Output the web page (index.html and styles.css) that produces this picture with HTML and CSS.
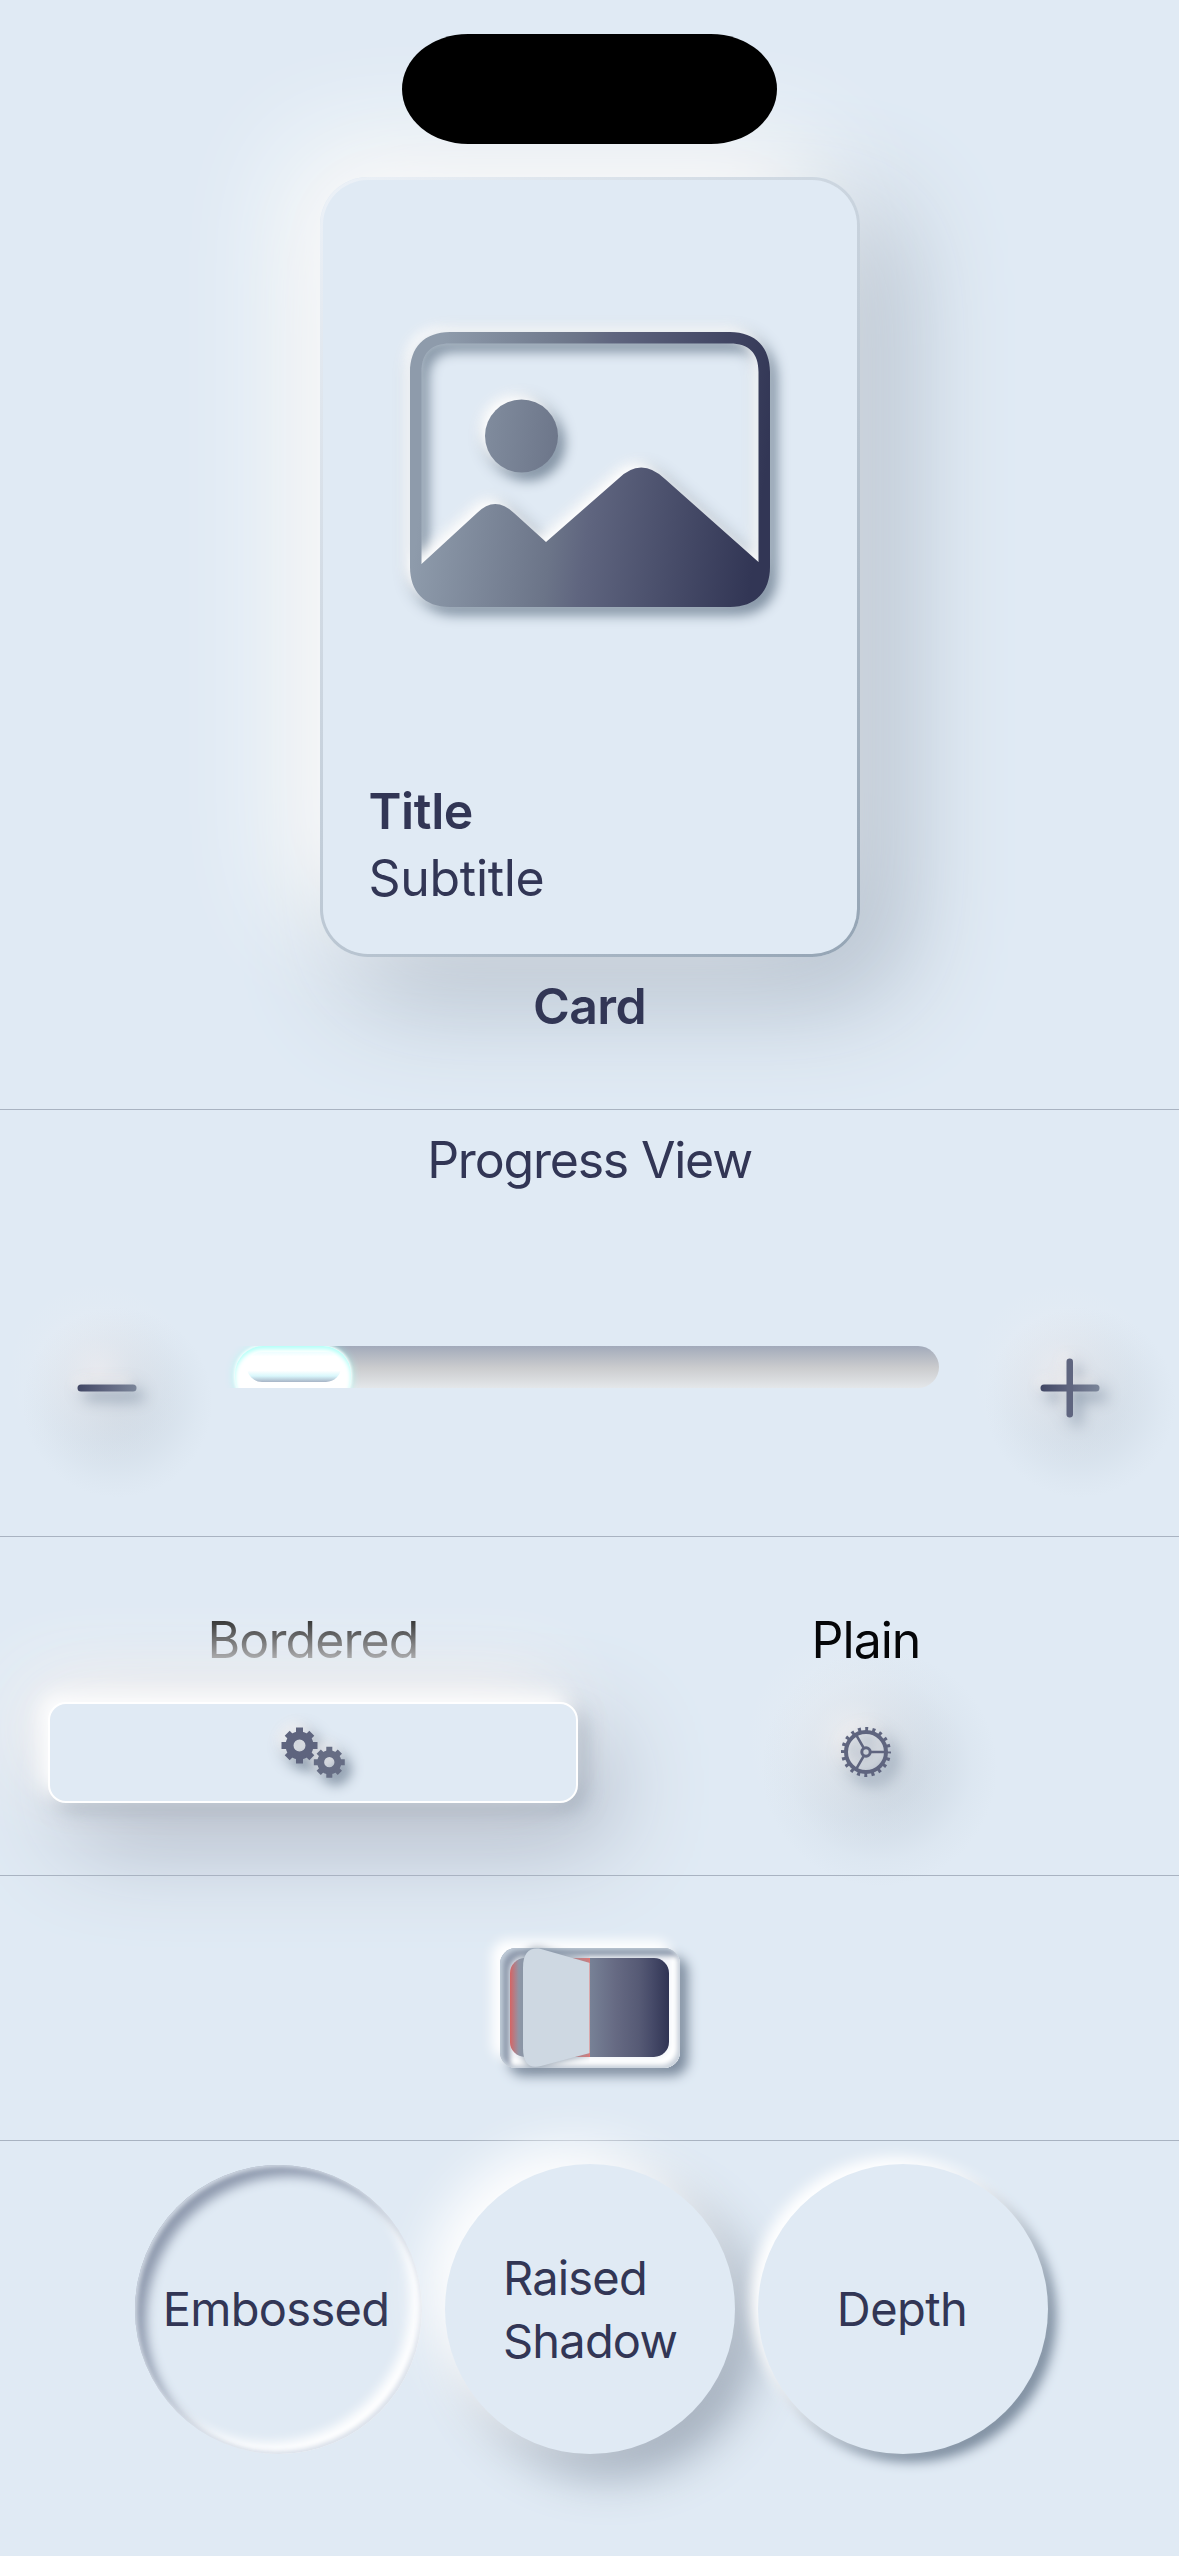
FILE: index.html
```html
<!DOCTYPE html>
<html lang="en">
<head>
<meta charset="utf-8">
<title>Neumorphic Components</title>
<link rel="stylesheet" href="styles.css">
</head>
<body>
<main class="screen">
  <section class="card-section">
    <div class="island"></div>
    <article class="card">
      <svg class="photo" viewBox="0 0 360 275" width="360" height="275">
        <defs>
          <linearGradient id="ink" gradientUnits="userSpaceOnUse" x1="20" y1="100" x2="355" y2="145">
            <stop offset="0" stop-color="#8e9bab"/>
            <stop offset=".4" stop-color="#6b7488"/>
            <stop offset=".5" stop-color="#5f657f"/>
            <stop offset="1" stop-color="#323655"/>
          </linearGradient>
        </defs>
        <path fill="url(#ink)" fill-rule="evenodd" d="M40 0H320C346 0 360 16 360 40V235C360 259 346 275 320 275H40C14 275 0 259 0 235V40C0 16 14 0 40 0ZM40 11.500C21 11.500 11.500 21 11.500 40V232L67 181Q85 163 104 181L136 210L208 147Q231 124 255 147L348.500 230V40C348.500 21 339 11.500 320 11.500Z"/>
        <circle fill="url(#ink)" cx="111.500" cy="104" r="36.500"/>
      </svg>
      <div class="caption">
        <h2 class="title">Title</h2>
        <p class="subtitle">Subtitle</p>
      </div>
    </article>
    <h3 class="card-label">Card</h3>
  </section>

  <section class="progress-section">
    <p class="progress-label">Progress View</p>
    <div class="progress-row">
      <button class="step" aria-label="Decrease">
        <svg class="step-icon" viewBox="0 0 60 60" width="60" height="60">
          <defs>
            <linearGradient id="bar" gradientUnits="userSpaceOnUse" x1="0" y1="28" x2="60" y2="34">
              <stop offset="0" stop-color="#414765"/>
              <stop offset=".5" stop-color="#606680"/>
              <stop offset="1" stop-color="#7b869a"/>
            </linearGradient>
          </defs>
          <rect fill="url(#bar)" x=".5" y="26.500" width="59" height="7" rx="3.500"/>
        </svg>
      </button>
      <div class="track"><div class="fill"><div class="core"></div></div></div>
      <button class="step" aria-label="Increase">
        <svg class="step-icon" viewBox="0 0 60 60" width="60" height="60">
          <rect fill="url(#bar)" x=".5" y="26.500" width="59" height="7" rx="3.500"/>
          <rect fill="#5f657f" x="26.500" y=".5" width="6.500" height="59" rx="3.200"/>
        </svg>
      </button>
    </div>
  </section>

  <section class="buttons-section">
    <div class="button-group">
      <p class="bordered-label">Bordered</p>
      <button class="bordered" aria-label="Settings">
        <svg class="gears" viewBox="0 0 64 51" width="64" height="51">
          <defs>
            <g id="cog">
              <circle r="10" fill="none" stroke-width="8"/>
              <path stroke-width="7" stroke-linecap="butt" d="M0-11V-18M0 11V18M11 0H18M-11 0H-18M7.800-7.800L12.300-12.300M-7.800-7.800L-12.300-12.300M7.800 7.800L12.300 12.300M-7.800 7.800L-12.300 12.300"/>
            </g>
          </defs>
          <use href="#cog" stroke="#5e647e" transform="translate(18.500 18.500)"/>
          <use href="#cog" stroke="#666d84" transform="translate(48.300 35.200) scale(.86)"/>
        </svg>
      </button>
    </div>
    <div class="button-group">
      <p class="plain-label">Plain</p>
      <button class="plain" aria-label="Gear">
        <svg class="gear" viewBox="-26 -26 52 52" width="52" height="52" fill="none" stroke="#5f657f">
          <circle r="20" stroke-width="4"/>
          <circle r="23" stroke-width="4" stroke-dasharray="3 4.226" stroke-dashoffset="1.500"/>
          <circle r="4.200" stroke-width="3"/>
          <path stroke-width="2.600" d="M5 0H20M-2.500-4.330L-10-17.320M-2.500 4.330L-10 17.320"/>
        </svg>
      </button>
    </div>
  </section>

  <section class="toggle-section">
    <div class="toggle">
      <div class="window"><div class="window-off"></div><div class="window-on"></div></div>
      <svg class="flap" viewBox="0 0 68 120" width="68" height="120">
        <path fill="#ced8e2" d="M0 20C0 4 7-1 18 1L67 15V105L18 118C7 121 0 116 0 100Z"/>
      </svg>
    </div>
  </section>

  <section class="circles-section">
    <div class="circle embossed"><span>Embossed</span></div>
    <div class="circle raised"><span>Raised<br>Shadow</span></div>
    <div class="circle depth"><span>Depth</span></div>
  </section>
</main>
</body>
</html>
```
FILE: styles.css
```css
* { box-sizing: border-box; }

body {
  margin: 0;
  background: #e0eaf4;
  color: #323655;
  font-family: Inter, "Liberation Sans", sans-serif;
  font-size: 50px;
  line-height: 61px;
}

h2, h3, p { margin: 0; font-size: inherit; font-weight: 400; }

button {
  margin: 0;
  padding: 0;
  border: 0;
  background: none;
  color: inherit;
  font: inherit;
}

svg { display: block; overflow: visible; }

.screen {
  display: flex;
  flex-direction: column;
  width: 1179px;
  height: 2556px;
  overflow: hidden;
}

.screen > section + section { border-top: 1px solid #a9b3c1; }

/* Card */
.card-section {
  display: flex;
  flex-direction: column;
  align-items: center;
  height: 1109px;
  padding-top: 34px;
}

.island {
  z-index: 1;
  width: 375px;
  height: 110px;
  border-radius: 66px / 55px;
  background: #000;
}

.card {
  display: flex;
  flex-direction: column;
  width: 540px;
  height: 780px;
  margin-top: 33px;
  padding: 152px 45px 45px 46px;
  border: 3px solid transparent;
  border-radius: 48px;
  background:
    linear-gradient(#e0eaf4, #e0eaf4) padding-box,
    linear-gradient(135deg, #edf2f8, #c3ced9 50%, #94a4b4) border-box;
  box-shadow: -34px -34px 110px #fffefc, 34px 34px 110px #a9b5c3;
}

.photo {
  align-self: center;
  filter: drop-shadow(-6px -6px 6px #fff) drop-shadow(7px 8px 6px #8393a4);
}

.caption {
  display: flex;
  flex-direction: column;
  gap: 6px;
  margin-top: auto;
}

.title, .card-label { font-weight: 600; letter-spacing: -.4px; }
.subtitle { letter-spacing: -.300px; }
.card-label { margin-top: 19px; letter-spacing: -.6px; }

/* Progress */
.progress-section { height: 427px; padding-top: 20px; text-align: center; }
.progress-label { letter-spacing: -1.200px; }

.progress-row {
  display: grid;
  grid-template-columns: 214px 699px 210px;
  column-gap: 26px;
  height: 240px;
  margin-top: 77px;
}

.step {
  display: grid;
  place-items: center;
  height: 240px;
  background:
    radial-gradient(circle at 46% 44%, rgba(244, 241, 243, .65), rgba(244, 241, 243, .28) 35px, rgba(244, 241, 243, .06) 70px, rgba(244, 241, 243, 0) 95px),
    radial-gradient(circle at 55% 56%, rgba(180, 192, 204, .5), rgba(180, 192, 204, .25) 45px, rgba(180, 192, 204, .06) 80px, rgba(180, 192, 204, 0) 95px);
}

.step-icon, .gear { filter: drop-shadow(-5px -6px 6px #f2f0f1) drop-shadow(8px 9px 7px #98a6b6); }

.track {
  height: 42px;
  margin-top: 78px;
  border-radius: 21px;
  background: linear-gradient(#a2aaba, #cbccce 52%, #e4e7ea);
  overflow-x: visible;
  overflow-y: clip;
}

.fill {
  width: 116px;
  height: 60px;
  margin-left: -5px;
  padding: 6px 10px 6px 12px;
  border-radius: 28px;
  background: #fff;
  box-shadow: 0 0 3px 1px #fff, 0 0 10px #a6fff4, inset 0 3px 4px #b2fff8;
}

.core {
  height: 30px;
  border-radius: 15px;
  background: linear-gradient(#edfdff, #fff 15%, #fff 62%, #d9f7fc 80%, #a7b4c6);
}

/* Buttons */
.buttons-section {
  display: flex;
  height: 339px;
  padding: 73px 0 0 48px;
}

.button-group {
  display: flex;
  flex-direction: column;
  align-items: center;
  width: 530px;
  gap: 31px;
}

.button-group + .button-group { width: 576px; }

.bordered-label {
  z-index: 1;
  color: transparent;
  background: linear-gradient(#3c3d3d 20%, #b6b6b8 85%);
  background-clip: text;
  letter-spacing: -.9px;
}

.plain-label { z-index: 1; color: #050608; letter-spacing: -1px; }

.bordered {
  display: grid;
  place-items: center;
  width: 530px;
  height: 101px;
  border: 2px solid #fff;
  border-radius: 18px;
  background: #e0eaf4;
  box-shadow:
    -8px -8px 20px #fff,
    8px 8px 20px rgba(135, 149, 166, .5),
    -22px -24px 80px #f8f4f3,
    26px 34px 100px #a8b0bf;
}

.gears { filter: drop-shadow(-5px -6px 6px #f5f4f5) drop-shadow(7px 8px 6px #8493a4); }

.plain {
  display: grid;
  flex: none;
  place-items: center;
  width: 270px;
  height: 270px;
  margin-top: -85px;
  background:
    radial-gradient(circle at 45% 45%, rgba(245, 244, 245, .75), rgba(245, 244, 245, .3) 40px, rgba(245, 244, 245, .07) 80px, rgba(245, 244, 245, 0) 110px),
    radial-gradient(circle at 55% 56%, rgba(165, 178, 192, .55), rgba(165, 178, 192, .25) 50px, rgba(165, 178, 192, .06) 92px, rgba(165, 178, 192, 0) 118px);
}

/* Toggle */
.toggle-section {
  display: flex;
  justify-content: center;
  height: 265px;
  padding-top: 72px;
}

.toggle {
  position: relative;
  width: 180px;
  height: 120px;
  padding: 10px 11px 11px 10px;
  border-radius: 16px;
  background: #f3f6fa;
  box-shadow:
    inset -3px -3px 4px #c9d1db,
    inset 3px 2px 4px #c0ccd8,
    inset 10px 8px 5px #939eb0,
    inset -9px -9px 5px #fff,
    -8px -8px 12px #fff,
    8px 8px 12px #7f8ea0;
}

.window {
  display: flex;
  height: 99px;
  border-radius: 15px;
  overflow: hidden;
}

.window-off { width: 80px; background: linear-gradient(90deg, #d66464, #9297a8 9px, #929caa 16px, #e87774 40px); }
.window-on { flex: 1; background: linear-gradient(90deg, #778196, #666a83 32%, #565a75 62%, #474b69 78%, #303454); }

/* The half-turned shutter lies over the window */
.flap {
  position: absolute;
  left: 23px;
  top: 0;
  filter: drop-shadow(0 0 4px #8190a1);
  clip-path: inset(-8px 1px -8px -10px);
}

/* Circles */
.circles-section {
  display: flex;
  flex: 1;
  gap: 23px;
  padding: 23px 0 0 132px;
  font-size: 47px;
  line-height: 63px;
}

.circle {
  display: grid;
  place-items: center;
  width: 290px;
  height: 290px;
  border-radius: 50%;
  background: #e0eaf4;
}

.circle span { margin-top: -1px; letter-spacing: -.8px; }

.embossed {
  width: 287px;
  margin: 1px 0 0 3px;
  height: 289px;
  box-shadow:
    inset 2px 2px 5px #d5dde7,
    inset -3px -3px 4px #dde3ec,
    inset 11px 11px 11px #8f9aae,
    inset -11px -11px 11px #fff;
}

.embossed span { margin: -3px 5px 0 0; letter-spacing: -.7px; }
.depth span { margin-right: 2px; letter-spacing: -.6px; }

.raised { box-shadow: -18px -18px 48px #fff, 20px 20px 48px #9ba7b6; }
.depth { box-shadow: -7px -7px 14px #fff, 8px 8px 12px #7e8ea0; }
```
